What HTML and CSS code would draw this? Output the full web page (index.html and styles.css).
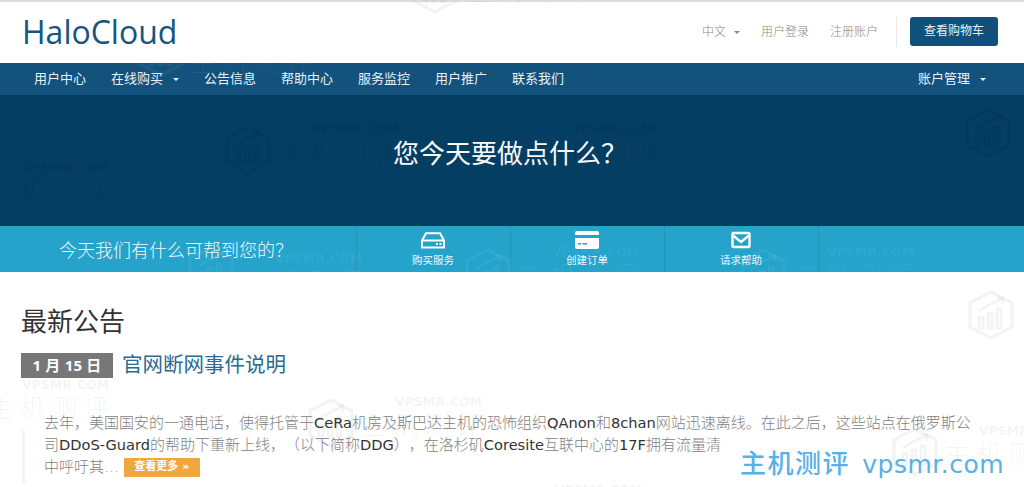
FILE: index.html
```html
<!DOCTYPE html>
<html lang="zh">
<head>
<meta charset="utf-8">
<title>HaloCloud</title>
<link rel="stylesheet" href="styles.css">
</head>
<body>
<div class="page">
  <svg class="defs" width="0" height="0" aria-hidden="true">
    <symbol id="hex" viewBox="0 0 46 50">
      <path d="M23 2 44 13V37L23 48 2 37V13Z" fill="none" stroke="currentColor" stroke-width="3"/>
      <path d="M11 38V27H15V38ZM20 38V23H24V38ZM29 38V19H33V38ZM11 21 24 13 M24 13 34 9M29 8H35V14" fill="none" stroke="currentColor" stroke-width="2.5"/>
    </symbol>
  </svg>
  <header class="top">
    <a class="logo">HaloCloud</a>
    <div class="top-links">
      <a class="top-link">中文<span class="caret small"></span></a>
      <a class="top-link">用户登录</a>
      <a class="top-link">注册账户</a>
      <span class="top-sep"></span>
      <a class="cart">查看购物车</a>
    </div>
  </header>
  <nav class="nav">
    <a class="nav-item">用户中心</a>
    <a class="nav-item">在线购买<span class="caret"></span></a>
    <a class="nav-item">公告信息</a>
    <a class="nav-item">帮助中心</a>
    <a class="nav-item">服务监控</a>
    <a class="nav-item">用户推广</a>
    <a class="nav-item">联系我们</a>
    <a class="nav-item nav-right">账户管理<span class="caret"></span></a>
    <div class="wm w1b"><svg class="wm-hex"><use href="#hex"/></svg><span class="wm-name">主机测评</span></div>
  </nav>
  <section class="hero"><h1 class="hero-title">您今天要做点什么？</h1></section>
  <section class="actions">
    <div class="actions-lead">今天我们有什么可帮到您的？</div>
    <a class="action">
      <svg class="action-icon" viewBox="0 0 24 18"><path d="M5 2.200h14L23 9.500v7H1v-7ZM1.500 9.500h21" fill="none" stroke="#fff" stroke-width="2"/><path d="M15 12h2v2h-2zM18.500 12h2v2h-2z" fill="#fff"/></svg>
      <span>购买服务</span>
    </a>
    <a class="action">
      <svg class="action-icon" viewBox="0 0 24 18"><path d="M2 0h20a2 2 0 0 1 2 2v2H0V2a2 2 0 0 1 2-2ZM0 7h24v9a2 2 0 0 1-2 2H2a2 2 0 0 1-2-2ZM3 12v1.500h3V12ZM7.500 12v1.500H12V12Z" fill="#fff" fill-rule="evenodd"/></svg>
      <span>创建订单</span>
    </a>
    <a class="action">
      <svg class="action-icon" viewBox="0 0 24 18"><rect x="3.500" y="2" width="17" height="14" rx="1" fill="none" stroke="#fff" stroke-width="2.400"/><path d="M4 4.500 12 11l8-6.500" fill="none" stroke="#fff" stroke-width="2.400"/></svg>
      <span>请求帮助</span>
    </a>
    <div class="action action-empty"></div>
    <div class="wm w6"><svg class="wm-hex"><use href="#hex"/></svg><span class="wm-url">VPSMR.COM</span><span class="wm-name">主机测评</span></div>
    <div class="wm w7"><svg class="wm-hex"><use href="#hex"/></svg><span class="wm-url">VPSMR.COM</span><span class="wm-name">主机测评</span></div>
    <div class="wm w8"><svg class="wm-hex"><use href="#hex"/></svg><span class="wm-url">VPSMR.COM</span><span class="wm-name">主机测评</span></div>
  </section>
  <main class="main">
    <h2 class="section-title">最新公告</h2>
    <div class="news-head">
      <span class="date">1 月 15 日</span>
      <a class="news-title">官网断网事件说明</a>
    </div>
    <p class="news-body">去年，美国国安的一通电话，使得托管于<b>CeRa</b>机房及斯巴达主机的恐怖组织<b>QAnon</b>和<b>8chan</b>网站迅速离线。在此之后，这些站点在俄罗斯公<br>司<b>DDoS-Guard</b>的帮助下重新上线，（以下简称<b>DDG</b>），在洛杉矶<b>Coresite</b>互联中心的<b>17F</b>拥有流量清<br>中呼吁其… <a class="more">查看更多 »</a></p>
  </main>

  <div class="wm w1"><svg class="wm-hex"><use href="#hex"/></svg><span class="wm-url">VPSMR.COM</span><span class="wm-name">主机测评</span></div>
  <div class="wm w2 on-dark"><svg class="wm-hex"><use href="#hex"/></svg><span class="wm-url">VPSMR.COM</span><span class="wm-name">主机测评</span></div>
  <div class="wm w3 on-dark"><span class="wm-url">VPSMR.COM</span><span class="wm-name">主机测评</span></div>
  <div class="wm w4 on-dark"><span class="wm-url">VPSMR.COM</span><span class="wm-name">主机测评</span></div>
  <div class="wm w5 on-dark"><svg class="wm-hex"><use href="#hex"/></svg></div>
  <div class="wm w9"><span class="wm-url">VPSMR.COM</span><span class="wm-name">主机测评</span><span class="wm-bar"></span></div>
  <div class="wm w10"><svg class="wm-hex"><use href="#hex"/></svg><span class="wm-url">VPSMR.COM</span><span class="wm-name">主机测评</span></div>
  <div class="wm w11"><svg class="wm-hex"><use href="#hex"/></svg></div>
  <div class="wm w12"><svg class="wm-hex"><use href="#hex"/></svg><span class="wm-url">VPSMR.COM</span><span class="wm-name">主机测评</span></div>
  <div class="wm w13"><span class="wm-url">VPSMR.COM</span></div>
  <div class="stamp">主机测评 <span class="stamp-url">vpsmr.com</span></div>
</div>
</body>
</html>
```

FILE: styles.css
```css
* { box-sizing: border-box; }
html, body { margin: 0; padding: 0; }
body { background: #fff; font-family: "Open Sans", "Noto Sans CJK SC", sans-serif; color: #333; }
.page { position: relative; width: 1024px; height: 487px; overflow: hidden; }
.defs { position: absolute; }
a { color: inherit; text-decoration: none; }

.top { height: 63px; border-top: 2px solid #ddd; display: flex; align-items: center; justify-content: space-between; padding: 0 26px 2px 22px; }
.logo { font-size: 32px; line-height: 40px; color: #14567f; font-family: "Open Sans", sans-serif; }
.top-links { display: flex; align-items: center; font-size: 12px; color: #888; }
.top-link { margin-right: 21px; font-weight: 300; padding-bottom: 2px; }
.top-link:nth-child(3) { margin-right: 18px; }
.top-sep { width: 1px; height: 30px; background: #e4e8e6; margin-right: 13px; }
.cart { width: 88px; height: 29px; line-height: 27px; text-align: center; background: #10507a; color: #e8f0f5; border-radius: 3px; font-size: 12px; }

.nav { position: relative; overflow: hidden; height: 32px; background: #12527c; display: flex; align-items: center; padding: 0 34px 4px; font-size: 13px; color: #eaf1f6; }
.nav-item { margin-right: 25px; white-space: nowrap; }
.nav-right { margin: 0 0 0 auto; padding-right: 4px; }
.caret { display: inline-block; width: 0; height: 0; margin-left: 10px; vertical-align: middle; border-left: 3.500px solid transparent; border-right: 3.500px solid transparent; border-top: 3.500px solid currentColor; }
.caret.small { margin-left: 8px; }

.hero { height: 131px; background: #043e63; display: flex; justify-content: center; padding: 40px 4px 0 0; }
.hero-title { margin: 0; font-size: 26px; line-height: 36px; font-weight: 400; color: #f7fafb; }

.actions { position: relative; overflow: hidden; height: 46px; background: #25a3cb; display: grid; grid-template-columns: 356px 154px 154px 154px 1fr; color: #f0f8fb; }
.actions-lead { display: flex; align-items: center; justify-content: center; font-size: 18px; padding-right: 4px; font-weight: 300; }
.action { display: flex; flex-direction: column; align-items: center; border-left: 1px solid #2095ba; padding: 5px 1px 0 0; font-size: 10.500px; line-height: 16px; }
.action-icon { width: 24px; height: 18px; margin-bottom: 3px; }

.main { padding: 31px 21px 0; }
.section-title { margin: 0; font-size: 26px; line-height: 36px; font-weight: 400; color: #333; }
.news-head { display: flex; align-items: flex-start; gap: 9px; margin-top: 14px; height: 25px; }
.date { width: 92px; height: 25px; background: #777; color: #fff; text-align: center; font-size: 15px; line-height: 25px; font-weight: 700; letter-spacing: .2px; }
.news-title { font-size: 20.500px; line-height: 22px; color: #2b6a92; }
.news-body { margin: 34px 0 0 23px; font-size: 15px; line-height: 22px; color: #828282; font-weight: 300; font-family: "DejaVu Sans", "Noto Sans CJK SC", sans-serif; white-space: nowrap; text-spacing-trim: space-all; }
.news-body b { font-weight: 400; font-size: 14.600px; color: #333; }
.more { display: inline-block; width: 76px; height: 19px; line-height: 18px; text-align: center; font-size: 11px; font-weight: 700; color: #fff; background: #efa73e; border-radius: 1px; vertical-align: 2px; }

.wm { position: absolute; width: 200px; height: 60px; color: rgba(80,80,80,.07); pointer-events: none; }
.wm.on-dark { color: rgba(0,0,0,.07); }
.wm-hex { position: absolute; left: 0; top: 0; width: 46px; height: 50px; }
.wm-url { position: absolute; left: 87px; top: -4px; font: 700 12.500px/16px "DejaVu Sans", sans-serif; white-space: nowrap; }
.wm-name { position: absolute; left: 52px; top: 9px; font-size: 26px; line-height: 36px; letter-spacing: 6px; white-space: nowrap; font-weight: 300; }
.wm-bar { position: absolute; left: 87px; top: 49px; width: 3px; height: 53px; background: currentColor; }
.w1 { left: 412px; top: -36px; }
.w1b { left: 138px; top: -28px; color: rgba(255,255,255,.06); }
.w1b .wm-hex { top: -8px; }
.w2 { left: 225px; top: 125px; }
.w3 { left: 485px; top: 125px; }
.w4 { left: -65px; top: 164px; }
.w5 { left: 965px; top: 108px; }
.w6 { left: 188px; top: 29px; color: rgba(255,255,255,.06); }
.w6 .wm-hex { top: -10px; }
.w7 { left: 465px; top: 22px; color: rgba(255,255,255,.06); }
.w8 { left: 740px; top: 22px; color: rgba(255,255,255,.06); }
.w9 { left: -65px; top: 381px; }
.w10 { left: 308px; top: 398px; }
.w11 { left: 968px; top: 290px; }
.w12 { left: 892px; top: 427px; }
.w13 { left: 468px; top: 486px; }
.stamp { position: absolute; left: 740px; top: 445px; font-size: 26px; line-height: 36px; color: #58b1e6; letter-spacing: 1.500px; font-weight: 500; white-space: nowrap; }
.stamp-url { font-family: "DejaVu Sans", sans-serif; font-size: 25px; margin-left: 4px; font-weight: 400; letter-spacing: .5px; }
```
